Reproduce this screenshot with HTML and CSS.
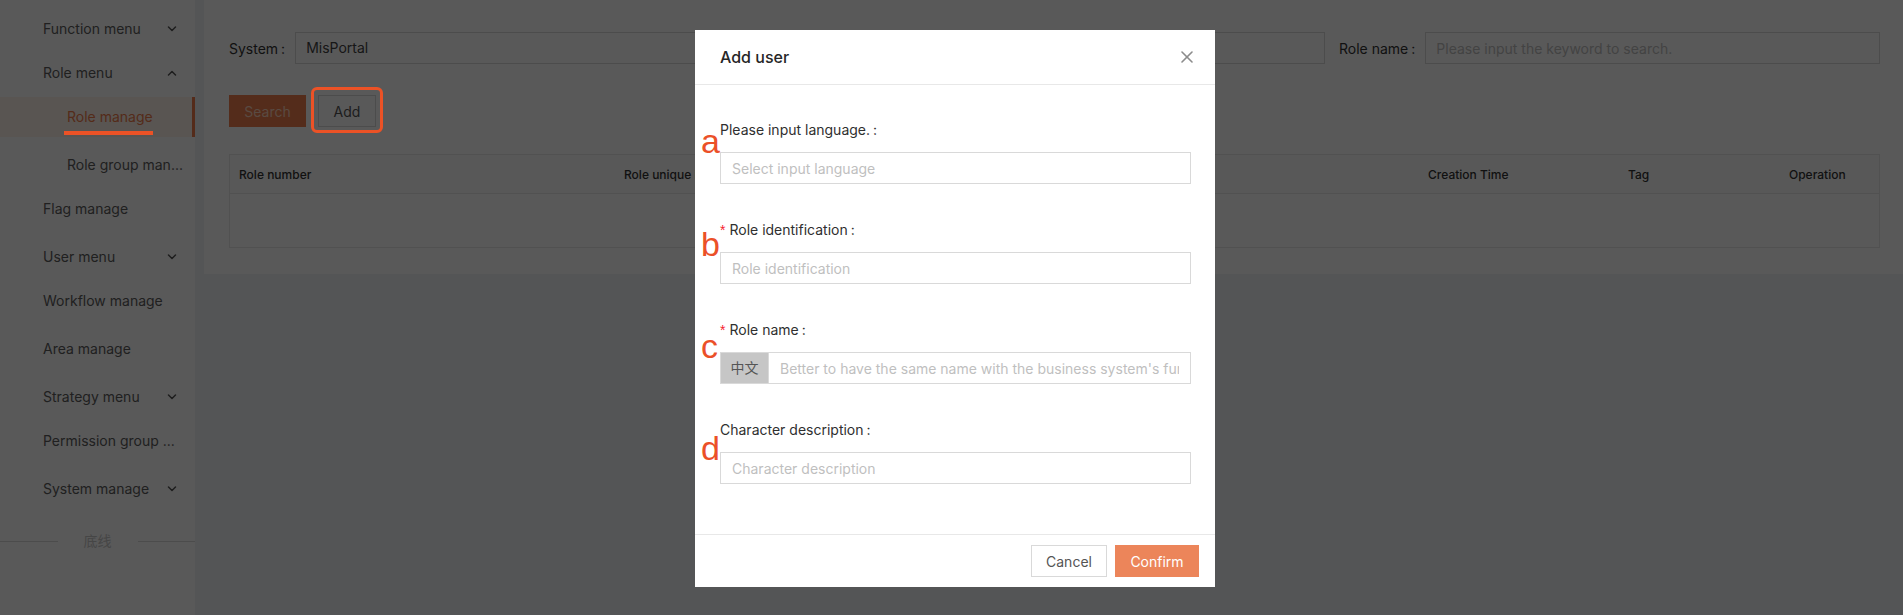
FILE: index.html
```html
<!DOCTYPE html>
<html lang="en">
<head>
<meta charset="utf-8">
<title>Role manage</title>
<link rel="stylesheet" href="styles.css">
</head>
<body>
<div class="layout">
  <aside class="sider">
    <ul class="menu">
      <li class="sub-title">Function menu
        <svg class="chev" viewBox="0 0 10 6" width="10" height="6"><polyline points="1.5,1 5,4.5 8.5,1"/></svg>
      </li>
      <li class="sub-title">Role menu
        <svg class="chev" viewBox="0 0 10 6" width="10" height="6"><polyline points="1.5,5 5,1.5 8.5,5"/></svg>
      </li>
      <li class="item sub-item active">Role manage<span class="mark-underline"></span></li>
      <li class="item sub-item last">Role group man...</li>
      <li class="item">Flag manage</li>
      <li class="sub-title">User menu
        <svg class="chev" viewBox="0 0 10 6" width="10" height="6"><polyline points="1.5,1 5,4.5 8.5,1"/></svg>
      </li>
      <li class="item">Workflow manage</li>
      <li class="item">Area manage</li>
      <li class="sub-title">Strategy menu
        <svg class="chev" viewBox="0 0 10 6" width="10" height="6"><polyline points="1.5,1 5,4.5 8.5,1"/></svg>
      </li>
      <li class="item">Permission group ...</li>
      <li class="sub-title">System manage
        <svg class="chev" viewBox="0 0 10 6" width="10" height="6"><polyline points="1.5,1 5,4.5 8.5,1"/></svg>
      </li>
    </ul>
    <div class="bottom-line"><span class="line"></span><span class="bl-text">底线</span><span class="line"></span></div>
  </aside>

  <main class="main">
    <section class="card">
      <div class="filters">
        <div class="filter">
          <span class="f-label">System<span class="colon">:</span></span>
          <div class="f-input f-value">MisPortal</div>
        </div>
        <div class="filter">
          <span class="f-label">Role name<span class="colon">:</span></span>
          <input class="f-input" placeholder="Please input the keyword to search.">
        </div>
      </div>
      <div class="actions">
        <button class="btn btn-search">Search</button>
        <span class="add-wrap">
          <button class="btn btn-add">Add</button>
          <span class="annot-box"></span>
        </span>
      </div>
      <div class="table">
        <div class="t-head">
          <div class="th">Role number</div>
          <div class="th">Role unique identification</div>
          <div class="th">Role name</div>
          <div class="th">Creation Time</div>
          <div class="th">Tag</div>
          <div class="th">Operation</div>
        </div>
        <div class="t-body"></div>
      </div>
    </section>
  </main>
</div>

<div class="mask"></div>

<div class="modal">
  <div class="modal-header">
    <span class="modal-title">Add user</span>
    <svg class="close" viewBox="0 0 12 12" width="12" height="12"><line x1="1" y1="1" x2="11" y2="11"/><line x1="11" y1="1" x2="1" y2="11"/></svg>
  </div>
  <div class="modal-body">
    <div class="field">
      <span class="annot-letter letter-a">a</span>
      <div class="label">Please input language.<span class="colon">:</span></div>
      <input class="input" placeholder="Select input language">
    </div>
    <div class="field">
      <span class="annot-letter letter-b">b</span>
      <div class="label"><span class="req">*</span>Role identification<span class="colon">:</span></div>
      <input class="input" placeholder="Role identification">
    </div>
    <div class="field">
      <span class="annot-letter letter-c">c</span>
      <div class="label"><span class="req">*</span>Role name<span class="colon">:</span></div>
      <div class="input-group">
        <span class="addon">中文</span>
        <input class="input in-group" placeholder="Better to have the same name with the business system's function">
      </div>
    </div>
    <div class="field">
      <span class="annot-letter letter-d">d</span>
      <div class="label">Character description<span class="colon">:</span></div>
      <input class="input" placeholder="Character description">
    </div>
  </div>
  <div class="modal-footer">
    <button class="btn btn-cancel">Cancel</button>
    <button class="btn btn-confirm">Confirm</button>
  </div>
</div>
</body>
</html>
```

FILE: styles.css
```css
* { box-sizing: border-box; }

html, body {
  margin: 0;
  padding: 0;
  height: 100%;
  overflow: hidden;
}

body {
  font-family: Inter, "Noto Sans CJK SC", sans-serif;
  font-size: 14px;
  color: #333;
  background: #f0f2f5;
}

.layout {
  display: flex;
  height: 615px;
}

/* ---------- sidebar ---------- */
.sider {
  width: 195px;
  flex: none;
  background: #fff;
  display: flex;
  flex-direction: column;
}

.menu {
  list-style: none;
  margin: 0;
  padding: 9px 0 0;
}

.menu li {
  height: 40px;
  line-height: 40px;
  color: #5c5c5c;
  white-space: nowrap;
  position: relative;
}

.sub-title {
  padding: 0 18px 0 43px;
  display: flex;
  align-items: center;
  justify-content: space-between;
  margin-bottom: 4px;
}

.item {
  padding-left: 43px;
  margin-bottom: 8px;
}

.sub-item { padding-left: 67px; }
.sub-item.last { margin-bottom: 4px; }

.item.active {
  background: #fff3ea;
  color: #f07c4c;
  border-right: 3px solid #f07c4c;
}

.chev {
  fill: none;
  stroke: #555;
  stroke-width: 1.5;
  stroke-linecap: round;
  stroke-linejoin: round;
}

.mark-underline {
  position: absolute;
  left: 64px;
  top: 34px;
  width: 89px;
  height: 4px;
  background: #ec5226;
  z-index: 15;
}

.bottom-line {
  display: flex;
  align-items: center;
  margin-top: 18px;
  height: 20px;
}

.bottom-line .line {
  flex: 1;
  height: 1px;
  background: #d9d9d9;
}

.bl-text {
  padding: 0 26px;
  color: #c8c8c8;
  font-size: 14px;
  line-height: 20px;
}

/* ---------- main ---------- */
.main {
  flex: 1;
  padding-left: 9px;
}

.card {
  background: #fff;
  height: 274px;
  padding: 32px 23px 0 25px;
}

.filters {
  display: grid;
  grid-template-columns: 2.026fr 1fr;
  column-gap: 14px;
}

.filter {
  display: flex;
  align-items: center;
  height: 32px;
}

.f-label {
  color: #333;
  white-space: nowrap;
  margin-right: 10px;
}

.colon {
  margin-left: 3px;
}

.f-input {
  flex: 1;
  min-width: 0;
  height: 32px;
  border: 1px solid #d9d9d9;
  padding: 0 10px;
  font: inherit;
  line-height: 30px;
  color: #444;
  background: #fff;
  outline: none;
}

.f-value {
  display: flex;
  align-items: center;
}

.f-input::placeholder { color: #bfbfbf; }

.actions {
  display: flex;
  gap: 12px;
  margin-top: 31px;
  align-items: center;
}

.btn {
  font: inherit;
  font-size: 14px;
  height: 32px;
  padding: 0;
  cursor: pointer;
  border-radius: 0;
}

.btn-search {
  width: 77px;
  border: none;
  background: #f07e4e;
  color: #ffd3bd;
}

.add-wrap {
  position: relative;
  display: inline-flex;
}

.btn-add {
  width: 58px;
  border: 1px solid #d9d9d9;
  background: #fff;
  color: #555;
}

.annot-box {
  position: absolute;
  left: -7px;
  top: -8px;
  right: -7px;
  bottom: -6px;
  border: 3px solid #ec5226;
  border-radius: 6px;
  z-index: 15;
}

.table {
  margin-top: 27px;
  border: 1px solid #e8e8e8;
}

.t-head {
  display: grid;
  grid-template-columns: 385px 402px 402px 200px 161px 1fr;
  height: 39px;
  align-items: center;
  border-bottom: 1px solid #e8e8e8;
  background: #fcfcfc;
}

.th {
  padding-left: 9px;
  font-size: 12px;
  font-weight: 500;
  color: #333;
  white-space: nowrap;
}

.t-body { height: 53px; }

/* ---------- mask & modal ---------- */
.mask {
  position: fixed;
  inset: 0;
  background: rgba(0, 0, 0, 0.65);
  z-index: 10;
}

.modal {
  position: fixed;
  top: 30px;
  left: 695px;
  width: 520px;
  background: #fff;
  z-index: 20;
}

.modal-header {
  height: 55px;
  padding: 0 22px 0 25px;
  display: flex;
  align-items: center;
  justify-content: space-between;
  border-bottom: 1px solid #e8e8e8;
}

.modal-title {
  font-size: 16px;
  font-weight: 500;
  color: #262626;
}

.close {
  stroke: #8c8c8c;
  stroke-width: 1.6;
  stroke-linecap: round;
}

.modal-body {
  padding: 34px 24px 15px 25px;
}

.field {
  position: relative;
  margin-bottom: 35px;
}

.label {
  height: 22px;
  line-height: 22px;
  margin-bottom: 11px;
  color: #2f2f2f;
}

.req {
  color: #f5222d;
  margin-right: 4px;
  font-family: "Liberation Sans", sans-serif;
}

.input {
  display: block;
  width: 100%;
  height: 32px;
  border: 1px solid #d9d9d9;
  padding: 0 11px;
  font: inherit;
  color: #333;
  outline: none;
  background: #fff;
}

.input::placeholder { color: #bfbfbf; }

.input-group {
  display: flex;
  height: 32px;
}

.addon {
  width: 48px;
  flex: none;
  background: #c6c6c6;
  border: 1px solid #d9d9d9;
  border-right: none;
  color: #555;
  text-align: center;
  line-height: 30px;
}

.input.in-group {
  flex: 1;
  min-width: 0;
  width: auto;
}

.annot-letter {
  position: absolute;
  left: -19px;
  font-family: "Liberation Sans", sans-serif;
  font-size: 34px;
  line-height: 34px;
  color: #eb5028;
}

.letter-a { top: 5px; }
.letter-b { top: 8px; }
.letter-c { top: 10px; }
.letter-d { top: 12px; }

.modal-footer {
  border-top: 1px solid #e8e8e8;
  padding: 10px 16px 10px;
  display: flex;
  justify-content: flex-end;
  gap: 8px;
}

.btn-cancel {
  width: 76px;
  border: 1px solid #d9d9d9;
  background: #fff;
  color: #555;
}

.btn-confirm {
  width: 84px;
  border: none;
  background: #ec855a;
  color: #fff;
}
```
